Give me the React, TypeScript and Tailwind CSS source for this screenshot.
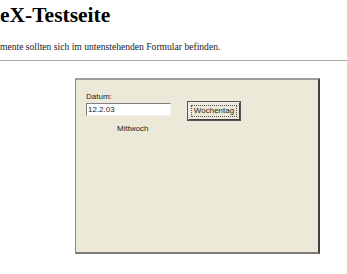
export default function App() {
  return (
    <div className="w-[347px] h-[274px] bg-white overflow-hidden relative">
      <h1
        className="mt-[3px] text-[21.5px] leading-[25px] font-bold text-black whitespace-nowrap"
        style={{ fontFamily: '"Liberation Serif", serif' }}
      >
        eX-Testseite
      </h1>
      <p
        className="mt-[13px] text-[9.6px] leading-[12px] text-[#222] whitespace-nowrap"
        style={{ fontFamily: '"Liberation Serif", serif' }}
      >
        mente sollten sich im untenstehenden Formular befinden.
      </p>
      <div className="mt-[7px] h-[1px] w-full bg-[#aca899]" />
      <div className="mt-[17px] ml-[75px] w-[245px] h-[176px] bg-[#ece9d8] border-t-2 border-l border-r-2 border-b-2 border-t-[#9d9d9d] border-l-[#8a8a8a] border-r-[#404040] border-b-[#7a7a7a]">
        <div
          className="pl-[10px] pt-[12px] text-[8px] leading-[10px] text-[#222]"
          style={{ fontFamily: '"Liberation Sans", Arial, sans-serif' }}
        >
          <div className="flex items-start">
            <div className="flex flex-col">
              <span className="h-[10px]">Datum:</span>
              <div className="mt-[1px] w-[85px] h-[13px] bg-white border-t border-l border-t-[#7f7f7f] border-l-[#7f7f7f] border-b border-r border-b-[#f4f3ee] border-r-[#f4f3ee] pl-[1px] flex items-center">
                12.2.03
              </div>
              <span className="mt-[8px] ml-[31px]">Mittwoch</span>
            </div>
            <div className="ml-[17px] mt-[10px] w-[52px] h-[18px] bg-[#ece9d8] border border-t-[#f0f0f0] border-l-[#f0f0f0] border-b-[#404040] border-r-[#404040] outline outline-1 outline-[#555] p-[2px]">
              <div className="w-full h-full border border-dotted border-[#555] flex items-center justify-center">
                Wochentag
              </div>
            </div>
          </div>
        </div>
      </div>
    </div>
  );
}
